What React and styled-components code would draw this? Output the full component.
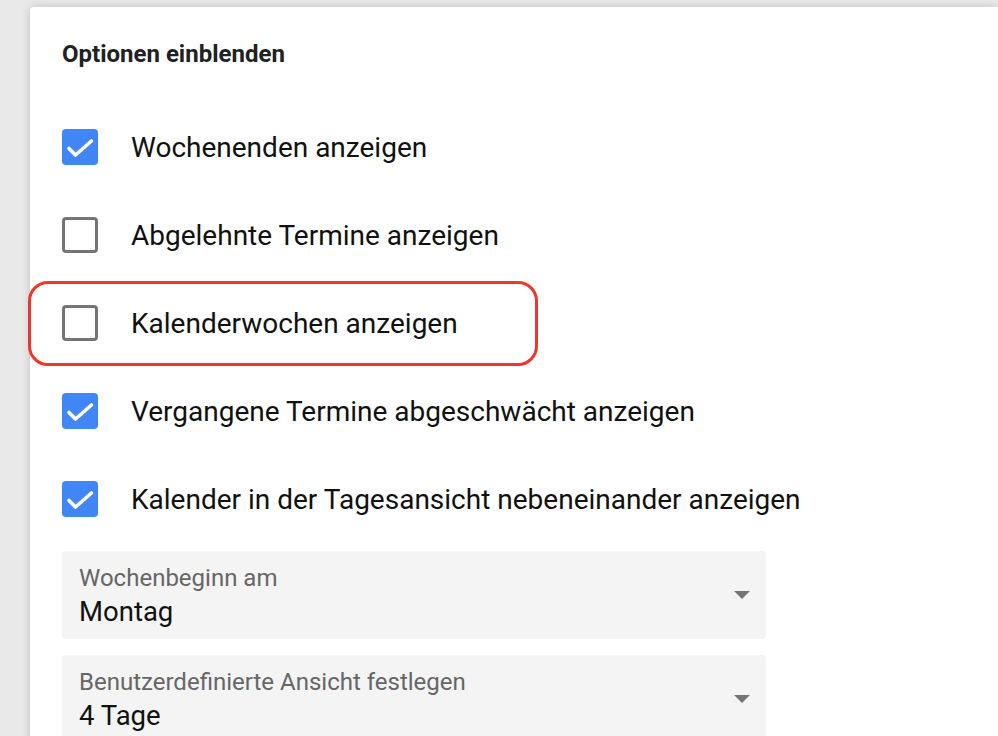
import React from "react";
import styled, { createGlobalStyle } from "styled-components";

const GlobalStyle = createGlobalStyle`
  html, body {
    margin: 0;
    padding: 0;
    background: #e9e9e9;
    font-family: Roboto, "Liberation Sans", Arial, sans-serif;
    overflow: hidden;
  }
`;

const Page = styled.div`
  width: 998px;
  height: 736px;
  padding: 7px 0 0 30px;
  box-sizing: border-box;
  overflow: hidden;
`;

const Card = styled.div`
  background: #fff;
  border-top-left-radius: 4px;
  box-shadow: 0 0 8px rgba(0, 0, 0, 0.18);
  height: 760px;
  padding: 33px 0 0 32px;
  box-sizing: border-box;
`;

const Title = styled.h2`
  margin: 0;
  font-size: 24px;
  line-height: 28px;
  font-weight: 700;
  color: #202124;
`;

const List = styled.div`
  margin-top: 35px;
  display: flex;
  flex-direction: column;
`;

const Row = styled.div`
  position: relative;
  height: 88px;
  display: flex;
  align-items: center;
  gap: 33px;
`;

const Box = styled.span`
  width: 36px;
  height: 36px;
  box-sizing: border-box;
  border-radius: 4px;
  flex-shrink: 0;
  display: flex;
  align-items: center;
  justify-content: center;
  background: ${({ checked }) => (checked ? "#4285f4" : "transparent")};
  border: ${({ checked }) => (checked ? "none" : "3px solid #757575")};
`;

const Label = styled.span`
  font-size: 28px;
  color: #111;
`;

const Highlight = styled.div`
  position: absolute;
  left: -34px;
  top: 2px;
  width: 510px;
  height: 85px;
  box-sizing: border-box;
  border: 3px solid #f0362a;
  border-radius: 20px;
  pointer-events: none;
`;

const Select = styled.div`
  width: 704px;
  height: 88px;
  margin-top: ${({ first }) => (first ? "8px" : "16px")};
  background: #f4f4f4;
  border-radius: 4px;
  padding: 14px 17px 0;
  box-sizing: border-box;
  position: relative;
  display: flex;
  flex-direction: column;
`;

const SelectLabel = styled.span`
  font-size: 24px;
  line-height: 26px;
  color: #666;
`;

const SelectValue = styled.span`
  font-size: 27.5px;
  line-height: 42px;
  color: #111;
`;

const Arrow = styled.span`
  position: absolute;
  right: 16px;
  top: 40px;
  width: 0;
  height: 0;
  border-left: 8px solid transparent;
  border-right: 8px solid transparent;
  border-top: 8px solid #757575;
`;

const Check = () => (
  <svg width="36" height="36" viewBox="0 0 36 36">
    <path
      d="M7 19.5l6.5 6.5L29.5 12"
      fill="none"
      stroke="#fff"
      strokeWidth="3.6"
      strokeLinecap="round"
      strokeLinejoin="round"
    />
  </svg>
);

const options = [
  { label: "Wochenenden anzeigen", checked: true },
  { label: "Abgelehnte Termine anzeigen", checked: false },
  { label: "Kalenderwochen anzeigen", checked: false, marked: true },
  { label: "Vergangene Termine abgeschwächt anzeigen", checked: true },
  { label: "Kalender in der Tagesansicht nebeneinander anzeigen", checked: true },
];

const App = () => (
  <>
    <GlobalStyle />
    <Page>
      <Card>
        <Title>Optionen einblenden</Title>
        <List>
          {options.map((o) => (
            <Row key={o.label}>
              <Box checked={o.checked}>{o.checked && <Check />}</Box>
              <Label>{o.label}</Label>
              {o.marked && <Highlight />}
            </Row>
          ))}
        </List>
        <Select first>
          <SelectLabel>Wochenbeginn am</SelectLabel>
          <SelectValue>Montag</SelectValue>
          <Arrow />
        </Select>
        <Select>
          <SelectLabel>Benutzerdefinierte Ansicht festlegen</SelectLabel>
          <SelectValue>4 Tage</SelectValue>
          <Arrow />
        </Select>
      </Card>
    </Page>
  </>
);

export default App;
